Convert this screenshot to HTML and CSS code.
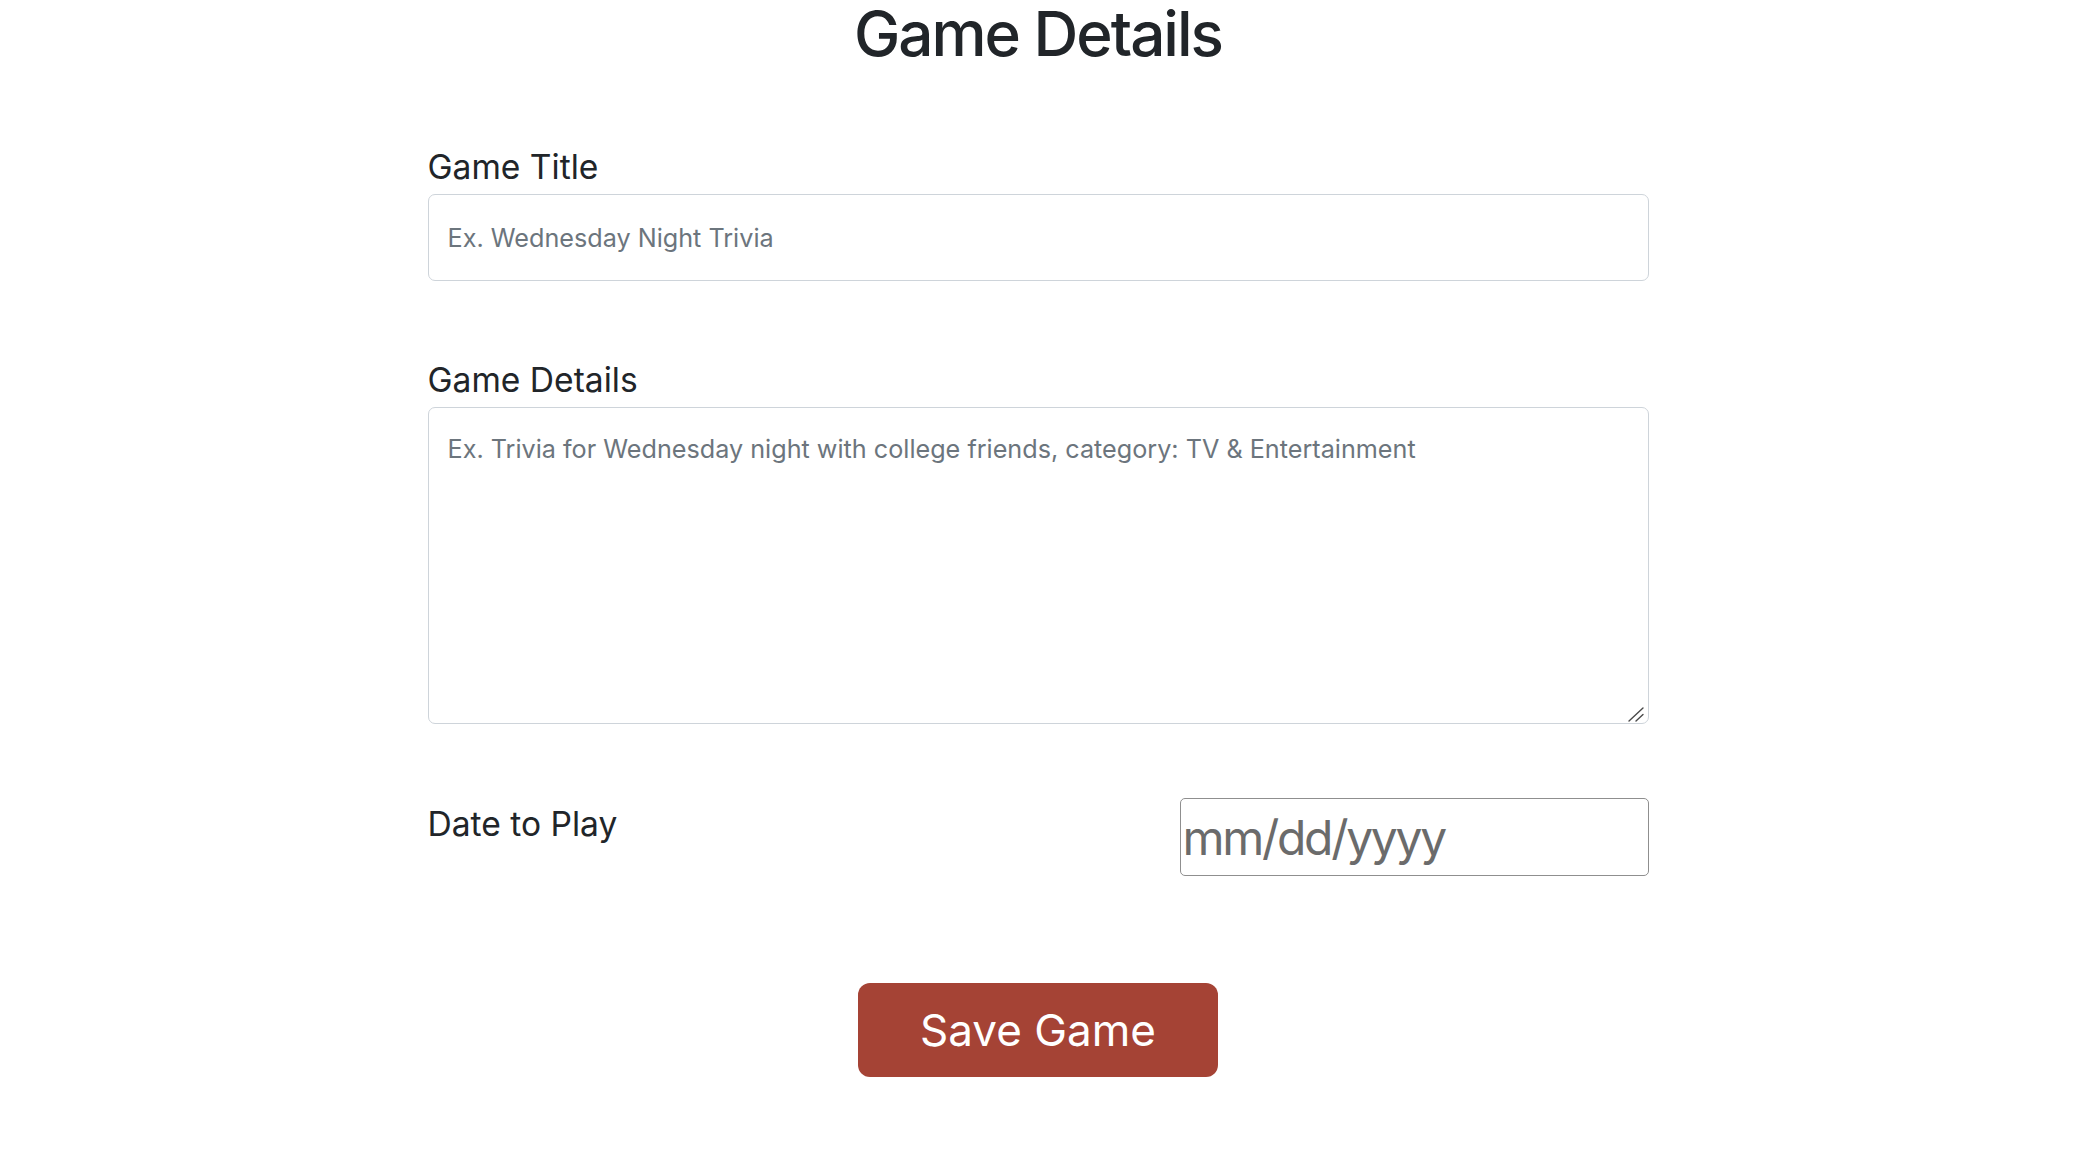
FILE: index.html
```html
<!DOCTYPE html>
<html lang="en">
<head>
<meta charset="utf-8">
<title>Game Details</title>
<link rel="stylesheet" href="styles.css">
</head>
<body>
<main class="page">
  <h1 class="page-title">Game Details</h1>
  <form class="game-form">
    <div class="field">
      <label class="field-label" for="title">Game Title</label>
      <input class="field-input" id="title" type="text" placeholder="Ex. Wednesday Night Trivia">
    </div>
    <div class="field field-details">
      <label class="field-label" for="details">Game Details</label>
      <div class="textarea-wrap">
        <textarea class="field-textarea" id="details" placeholder="Ex. Trivia for Wednesday night with college friends, category: TV &amp; Entertainment"></textarea>
        <svg class="resize-grip" width="20" height="20" viewBox="0 0 20 20" aria-hidden="true">
          <line x1="2" y1="18" x2="16" y2="5" />
          <line x1="9" y1="18" x2="16" y2="11.5" />
        </svg>
      </div>
    </div>
    <div class="date-row">
      <label class="field-label date-label" for="date">Date to Play</label>
      <input class="date-input" id="date" type="text" placeholder="mm/dd/yyyy">
    </div>
    <div class="actions">
      <button class="save-btn" type="button">Save Game</button>
    </div>
  </form>
</main>
</body>
</html>
```

FILE: styles.css
```css
* {
  box-sizing: border-box;
}

html, body {
  margin: 0;
  padding: 0;
  background: #ffffff;
}

body {
  font-family: Inter, "Noto Sans", "Liberation Sans", sans-serif;
  color: #212529;
}

.page {
  width: 1221px;
  margin: 0 auto;
  display: flex;
  flex-direction: column;
}

.page-title {
  margin: 0;
  font-size: 62px;
  line-height: 68px;
  font-weight: 500;
  letter-spacing: -2px;
  text-align: center;
  color: #212529;
}

.game-form {
  margin-top: 79px;
  display: flex;
  flex-direction: column;
}

.field {
  display: flex;
  flex-direction: column;
}

.field-details {
  margin-top: 79px;
}

.field-label {
  font-size: 33.6px;
  line-height: 40px;
  font-weight: 400;
  color: #212529;
  margin-bottom: 7px;
}

.field-input,
.field-textarea {
  width: 100%;
  border: 1px solid #ced4da;
  border-radius: 7px;
  font-family: Inter, "Noto Sans", "Liberation Sans", sans-serif;
  font-size: 25.2px;
  line-height: 39px;
  color: #212529;
  background: #ffffff;
  outline: none;
}

.field-input {
  height: 87px;
  padding: 23px 19px;
}

.textarea-wrap {
  position: relative;
  display: flex;
}

.field-textarea {
  display: block;
  height: 317px;
  padding: 22px 19px;
  resize: none;
}

.resize-grip {
  position: absolute;
  right: 2px;
  bottom: 1px;
  stroke: #4a4a4a;
  stroke-width: 1.4;
  stroke-linecap: round;
  pointer-events: none;
}

.field-input::placeholder,
.field-textarea::placeholder {
  color: #6c757d;
  opacity: 1;
}

.date-row {
  margin-top: 74px;
  display: flex;
  justify-content: space-between;
  align-items: flex-start;
}

.date-label {
  margin: 6px 0 0 0;
}

.date-input {
  width: 469px;
  height: 78px;
  border: 1px solid #8f8f8f;
  border-radius: 5px;
  padding: 0 2px;
  font-family: Inter, "Noto Sans", "Liberation Sans", sans-serif;
  font-size: 48px;
  letter-spacing: -2.3px;
  color: #6b6b6b;
  background: #ffffff;
  outline: none;
}

.date-input::placeholder {
  color: #6b6b6b;
  opacity: 1;
}

.actions {
  margin-top: 107px;
  display: flex;
  justify-content: center;
}

.save-btn {
  width: 360px;
  height: 94px;
  border: none;
  border-radius: 12px;
  background: #a54335;
  color: #ffffff;
  font-family: Inter, "Noto Sans", "Liberation Sans", sans-serif;
  font-size: 44px;
  font-weight: 400;
  cursor: pointer;
}
```
